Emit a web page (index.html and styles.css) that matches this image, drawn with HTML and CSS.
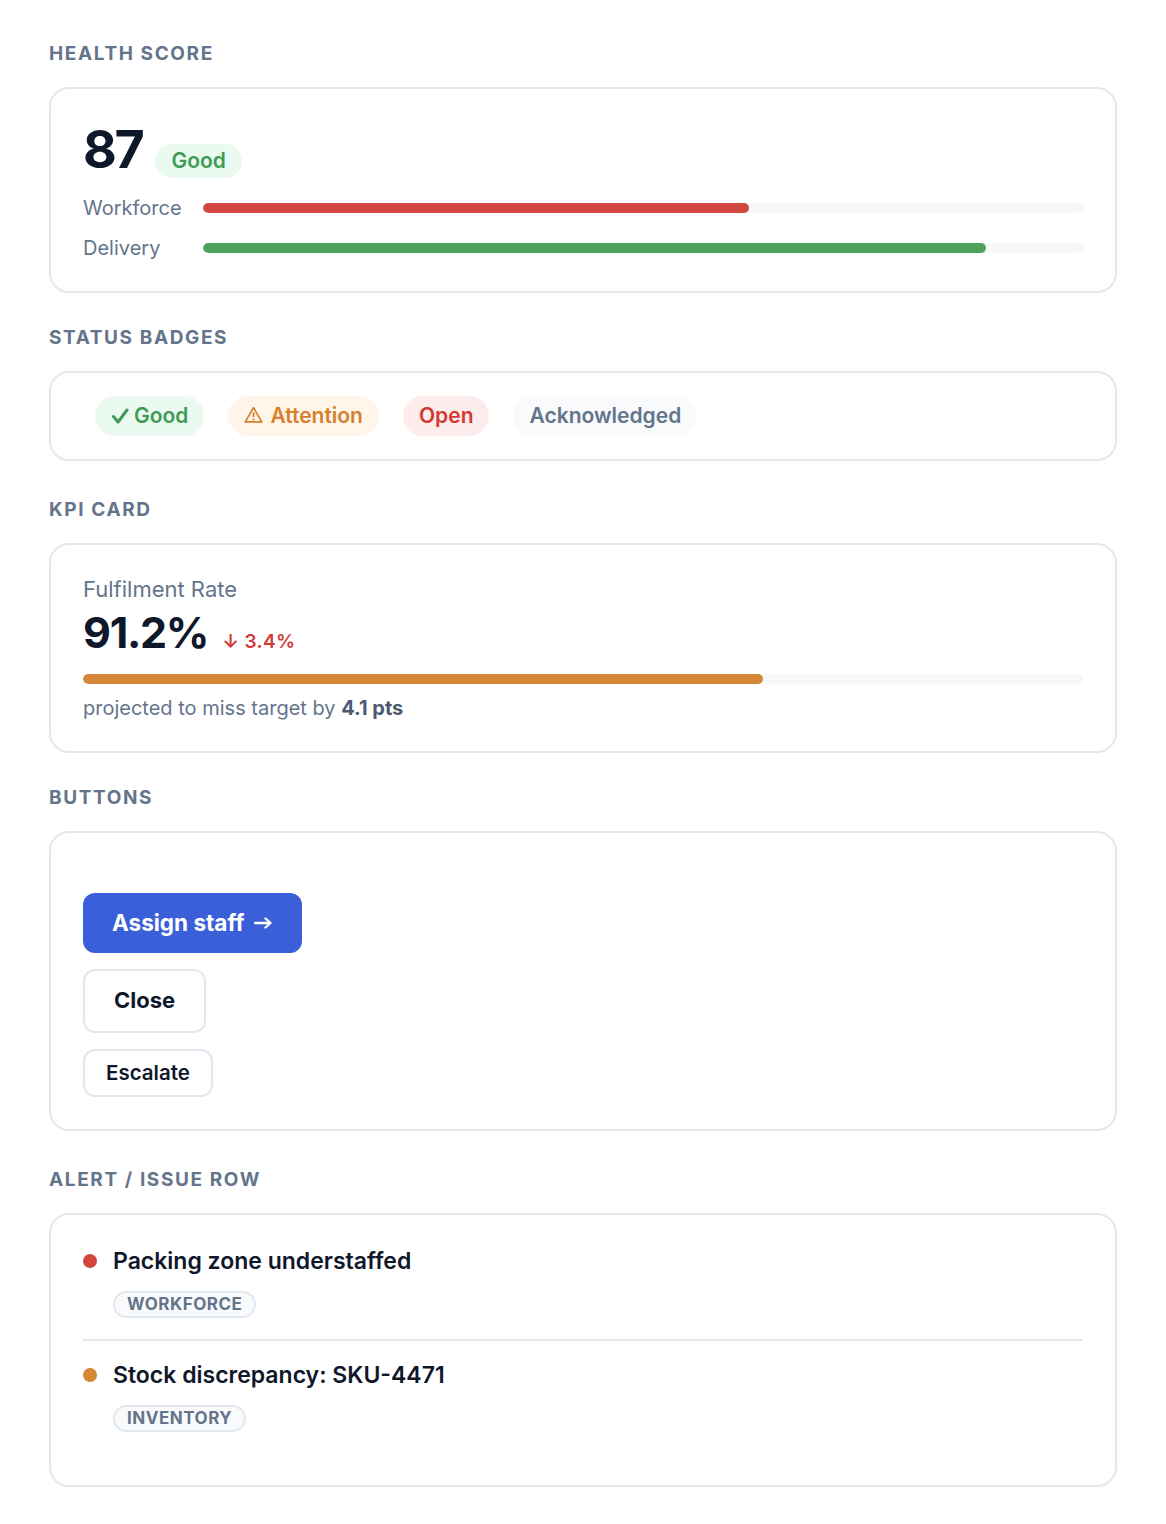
FILE: index.html
```html
<!DOCTYPE html>
<html lang="en">
<head>
<meta charset="utf-8">
<title>Components</title>
<link rel="stylesheet" href="styles.css">
</head>
<body>
<main class="page">
  <section class="section">
    <h2 class="section-title">Health Score</h2>
    <div class="card card-health">
      <div class="score-head">
        <span class="score">87</span>
        <span class="pill pill-good">Good</span>
      </div>
      <div class="score-rows">
        <div class="score-row">
          <span class="score-label">Workforce</span>
          <div class="track"><div class="fill fill-red" style="width:62%"></div></div>
        </div>
        <div class="score-row">
          <span class="score-label">Delivery</span>
          <div class="track"><div class="fill fill-green" style="width:89%"></div></div>
        </div>
      </div>
    </div>
  </section>

  <section class="section section-loose">
    <h2 class="section-title">Status Badges</h2>
    <div class="card card-badges">
      <span class="badge badge-good"><svg class="icon icon-check" viewBox="0 0 18 16" aria-hidden="true"><path d="M2.5 8.5 L7 14 L16 2" fill="none" stroke="currentColor" stroke-width="3" stroke-linecap="round" stroke-linejoin="round"/></svg>Good</span>
      <span class="badge badge-attn"><svg class="icon icon-warn" viewBox="0 0 18 16" aria-hidden="true"><path d="M9 1.5 L16.8 15 H1.2 Z" fill="none" stroke="currentColor" stroke-width="1.6" stroke-linejoin="round"/><path d="M9 6 V10.5" stroke="currentColor" stroke-width="1.8"/><circle cx="9" cy="12.7" r="1" fill="currentColor"/></svg>Attention</span>
      <span class="badge badge-open">Open</span>
      <span class="badge badge-ack">Acknowledged</span>
    </div>
  </section>

  <section class="section">
    <h2 class="section-title">KPI Card</h2>
    <div class="card card-kpi">
      <div class="kpi-label">Fulfilment Rate</div>
      <div class="kpi-value-row">
        <span class="kpi-value">91.2%</span>
        <span class="kpi-delta">↓ 3.4%</span>
      </div>
      <div class="track track-kpi"><div class="fill fill-orange" style="width:68%"></div></div>
      <div class="kpi-note">projected to miss target by <strong>4.1 pts</strong></div>
    </div>
  </section>

  <section class="section section-loose">
    <h2 class="section-title">Buttons</h2>
    <div class="card card-buttons">
      <button class="btn btn-primary" type="button">Assign staff<svg class="icon icon-arrow" viewBox="0 0 18 12" aria-hidden="true"><path d="M1 6 H16.5 M11.5 1.5 L16.5 6 L11.5 10.5" fill="none" stroke="currentColor" stroke-width="2.3" stroke-linecap="round" stroke-linejoin="round"/></svg></button>
      <button class="btn btn-outline btn-lg" type="button">Close</button>
      <button class="btn btn-outline btn-md" type="button">Escalate</button>
    </div>
  </section>

  <section class="section">
    <h2 class="section-title">Alert / Issue Row</h2>
    <div class="card card-alerts">
      <div class="alert-row">
        <div class="alert-head">
          <span class="dot dot-red"></span>
          <span class="alert-title">Packing zone understaffed</span>
        </div>
        <span class="tag">Workforce</span>
      </div>
      <div class="alert-row">
        <div class="alert-head">
          <span class="dot dot-orange"></span>
          <span class="alert-title">Stock discrepancy: SKU-4471</span>
        </div>
        <span class="tag">Inventory</span>
      </div>
    </div>
  </section>
</main>
</body>
</html>
```

FILE: styles.css
```css
* { box-sizing: border-box; }

html, body {
  margin: 0;
  padding: 0;
  background: #ffffff;
}

body {
  font-family: Inter, "Noto Sans", "DejaVu Sans", sans-serif;
  color: #0f172a;
}

.page {
  padding: 43px 49px 36px;
}

.section + .section {
  margin-top: 34px;
}

.section-loose + .section {
  margin-top: 38px;
}

.section-title {
  margin: 0 0 22px;
  font-size: 19px;
  line-height: 22px;
  font-weight: 700;
  letter-spacing: 0.085em;
  text-transform: uppercase;
  color: #64748b;
}

.card {
  border: 2px solid #e2e8f0;
  border-radius: 20px;
  background: #ffffff;
  padding: 32px;
}

/* Health score */
.score-head {
  display: flex;
  align-items: baseline;
  gap: 13px;
}

.score {
  font-size: 52px;
  line-height: 1.1;
  font-weight: 700;
  letter-spacing: -0.045em;
  color: #0f172a;
}

.pill {
  display: inline-block;
  padding: 4px 16px;
  border-radius: 999px;
  font-size: 21px;
  line-height: 26px;
  font-weight: 600;
}

.pill-good {
  background: #ebfaf0;
  color: #3f9b55;
}

.score-rows {
  margin-top: 19px;
  display: flex;
  flex-direction: column;
  gap: 18px;
}

.score-row {
  display: grid;
  grid-template-columns: 120px 1fr;
  align-items: center;
}

.score-label {
  font-size: 20px;
  line-height: 22px;
  color: #64748b;
}

.track {
  height: 10px;
  border-radius: 999px;
  background: #f7f8fa;
  overflow: hidden;
}

.fill {
  height: 100%;
  border-radius: 999px;
}

.fill-red { background: #d1463f; }
.fill-green { background: #4ea35c; }
.fill-orange { background: #d48735; }

/* Badges */
.card-badges {
  display: flex;
  align-items: center;
  gap: 24px;
  padding: 23px 44px;
}

.badge {
  display: inline-flex;
  align-items: center;
  height: 40px;
  padding: 0 16px;
  border-radius: 999px;
  font-size: 21px;
  line-height: 28px;
  font-weight: 600;
}

.icon {
  display: inline-block;
  flex: none;
}

.icon-check {
  width: 18px;
  height: 16px;
  margin-right: 5px;
}

.icon-warn {
  width: 19px;
  height: 17px;
  margin-right: 7px;
  margin-top: -3px;
}

.badge-good { background: #ebfaf0; color: #3f9b55; }
.badge-attn { background: #fff5e8; color: #d4822e; }
.badge-open { background: #fdeceb; color: #d13a34; }
.badge-ack { background: #f8fafc; color: #64748b; }

/* KPI */
.kpi-label {
  font-size: 22px;
  line-height: 24px;
  color: #64748b;
}

.kpi-value-row {
  margin-top: 8px;
  display: flex;
  align-items: baseline;
  gap: 14px;
}

.kpi-value {
  font-size: 43px;
  line-height: 1.1;
  font-weight: 700;
  letter-spacing: -0.03em;
  color: #0f172a;
}

.kpi-delta {
  font-size: 19px;
  font-weight: 600;
  color: #d13a34;
  letter-spacing: 0.02em;
}

.track-kpi {
  margin-top: 18px;
}

.kpi-note {
  margin-top: 13px;
  font-size: 20px;
  line-height: 22px;
  color: #64748b;
}

.kpi-note strong {
  font-weight: 700;
  color: #4b5a70;
}

/* Buttons */
.card-buttons {
  display: flex;
  flex-direction: column;
  align-items: flex-start;
  gap: 16px;
  padding: 60px 32px 32px;
}

.btn {
  font-family: Inter, "Noto Sans", sans-serif;
  border-radius: 12px;
  cursor: pointer;
  margin: 0;
}

.btn-primary {
  display: inline-flex;
  align-items: center;
  border: none;
  background: #3a5fd9;
  color: #ffffff;
  font-size: 22.5px;
  line-height: 26px;
  font-weight: 700;
  padding: 17px 30px 17px 29px;
}

.icon-arrow {
  width: 18px;
  height: 12px;
  margin-left: 10px;
}

.btn-outline {
  background: #ffffff;
  border: 2px solid #e2e8f0;
  color: #0f172a;
}

.btn-lg {
  font-size: 22px;
  line-height: 27px;
  font-weight: 700;
  padding: 16px 29px 17px;
}

.btn-md {
  font-size: 20.5px;
  line-height: 24px;
  font-weight: 600;
  padding: 10px 21px;
}

/* Alerts */
.alert-row {
  padding-bottom: 21px;
}

.alert-row + .alert-row {
  border-top: 2px solid #e2e8f0;
  padding-top: 20px;
}

.alert-head {
  display: flex;
  align-items: center;
  gap: 16px;
}

.dot {
  width: 14px;
  height: 14px;
  border-radius: 50%;
  flex: none;
}

.dot-red { background: #d1463f; }
.dot-orange { background: #d48735; }

.alert-title {
  font-size: 23px;
  line-height: 28px;
  font-weight: 600;
  color: #0f172a;
}

.tag {
  display: inline-block;
  margin: 16px 0 0 30px;
  padding: 0 12px;
  border: 2px solid #e2e8f0;
  border-radius: 999px;
  background: #f8fafc;
  font-size: 17px;
  line-height: 23px;
  font-weight: 700;
  letter-spacing: 0.03em;
  text-transform: uppercase;
  color: #64748b;
}
```
